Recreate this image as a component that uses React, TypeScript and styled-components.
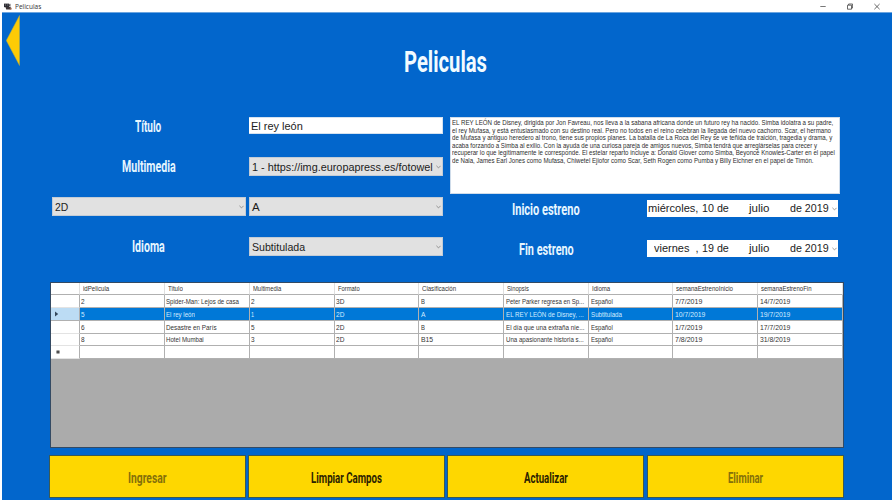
import React, { useLayoutEffect, useRef, useState } from "react";
import styled, { createGlobalStyle, css } from "styled-components";

const GlobalStyle = createGlobalStyle`
  *, *::before, *::after { box-sizing: border-box; }
  body { margin: 0; overflow: hidden; background: #fff; font-family: "Liberation Sans", Arial, sans-serif; }
`;

/* Text condensed or expanded horizontally to a given width. */
const FitBox = styled.span<{ $width: number }>`
  display: block;
  flex: none;
  width: ${(p) => p.$width}px;
  white-space: pre;
`;
const FitInner = styled.span`
  display: inline-block;
  vertical-align: top;
  transform-origin: 0 50%;
`;

function Fit({ w, children }: { w: number; children: string }) {
  const ref = useRef<HTMLSpanElement>(null);
  const [scale, setScale] = useState(1);
  useLayoutEffect(() => {
    const natural = ref.current?.offsetWidth;
    if (natural) setScale(w / natural);
  }, [w, children]);
  return (
    <FitBox $width={w}>
      <FitInner ref={ref} style={{ transform: `scaleX(${scale})` }}>
        {children}
      </FitInner>
    </FitBox>
  );
}

const Window = styled.div`
  display: flex;
  flex-direction: column;
  width: 893px;
  height: 500px;
  background: #fff;
`;

const TitleBar = styled.header`
  display: flex;
  align-items: center;
  height: 12px;
  flex: none;
  padding: 0 13px 0 4px;
  font: 7.5px/11px "Open Sans", sans-serif;
  color: #333;
`;
const AppIcon = styled.svg`
  width: 8px;
  height: 7px;
  margin-right: 3px;
`;
const WindowControls = styled.div`
  display: flex;
  gap: 21px;
  margin-left: auto;
  svg { width: 6px; height: 7px; display: block; }
`;

const Client = styled.main`
  flex: 1;
  display: flex;
  flex-direction: column;
  margin: 0 1px 0 2px;
  padding-left: 47px;
  background: #0266cc;
  border-top: 1px solid #6ba5e0;
`;

const Head = styled.div`
  display: flex;
  height: 104px;
  flex: none;
  margin-left: -47px;
`;
const BackButton = styled.button`
  width: 14px;
  height: 51px;
  margin: 2px 0 0 4px;
  padding: 0;
  border: 0;
  background: none;
  svg { display: block; }
`;
const agency = css`
  font-family: Roboto, sans-serif;
  font-weight: 700;
`;
const Title = styled.h1`
  ${agency}
  margin: 32px 0 0 383.5px;
  font-size: 29px;
  line-height: 34px;
  color: #f2fbff;
`;

const Form = styled.section`
  display: flex;
  height: 165px;
  flex: none;
`;
const Fields = styled.div`
  display: grid;
  grid-template-columns: 194px 194px;
  grid-auto-rows: 40px;
  column-gap: 3px;
  padding-left: 3px;
`;
const Details = styled.div`
  width: 390px;
  margin-left: 7px;
`;
const LabelCell = styled.label<{ $height: number; $indent: number }>`
  ${agency}
  display: flex;
  align-items: center;
  height: ${(p) => p.$height}px;
  padding-left: ${(p) => p.$indent}px;
  font-size: 17px;
  line-height: 18px;
  color: #e6f6ff;
`;
const TextInput = styled.div`
  display: flex;
  align-items: center;
  height: 17px;
  padding: 1px 0 0 2px;
  background: #fff;
  border: 1px solid #d5e2f0;
  border-left-width: 0;
  font-size: 11.5px;
  line-height: 13px;
  color: #1c1c1c;
`;
const Select = styled.div`
  display: flex;
  align-items: center;
  justify-content: space-between;
  height: 19px;
  padding: 1px 1px 0 2px;
  background: #e1e1e1;
  border: 1px solid #c3ccd6;
  font-size: 11.5px;
  line-height: 13px;
  color: #1c1c1c;
`;
const SelectCell = styled.div`
  width: 194px;
`;
const Synopsis = styled.div`
  height: 77px;
  padding: 1px 0 0 1px;
  background: #fff;
  border: 1px solid #cfdcea;
  font-size: 7.4px;
  line-height: 7.6px;
  color: #2d2d2d;
`;
const DateRow = styled.div`
  display: flex;
  justify-content: space-between;
  height: 40px;
  padding-right: 2px;
`;
const DatePicker = styled.div<{ $indent: number }>`
  display: flex;
  align-items: center;
  width: 191px;
  height: 17px;
  margin-top: 6px;
  padding: 0 1px 0 ${(p) => p.$indent}px;
  background: #fff;
  font-size: 11.5px;
  line-height: 13px;
  color: #1c1c1c;
`;
const Gap = styled.span<{ $width: number }>`
  flex: none;
  width: ${(p) => p.$width}px;
`;
const Push = styled.span`
  margin-left: auto;
  display: flex;
`;

const Table = styled.div`
  width: 794px;
  height: 166px;
  flex: none;
  background: #ababab;
  border: 1px solid #344a63;
  margin-left: 0.5px;
`;
const Row = styled.div<{ $selected?: boolean; $height: number }>`
  display: grid;
  grid-template-columns: 29px 85px 85px 85px 84.5px 85px 85px 84px 85px 84.5px;
  height: ${(p) => p.$height}px;
  background: ${(p) => (p.$selected ? "#0078d7" : "#fff")};
  color: ${(p) => (p.$selected ? "#d4ecff" : "#333")};
  font-size: 7.4px;
  line-height: 9px;
`;
const Cell = styled.div<{ $header?: boolean; $marker?: boolean; $tint?: boolean }>`
  display: flex;
  align-items: center;
  padding-left: ${(p) => (p.$header ? 3 : p.$marker ? 4 : 1.5)}px;
  border-right: 1px solid ${(p) => (p.$header ? "#dfdfdf" : "#b0b0b0")};
  border-bottom: 1px solid ${(p) => (p.$marker && !p.$tint ? "#e3e3e3" : "#b0b0b0")};
  background: ${(p) => (p.$tint ? "#bcdcf4" : "transparent")};
  overflow: hidden;
`;

const Actions = styled.footer`
  display: grid;
  grid-template-columns: repeat(4, 197px);
  column-gap: 2.2px;
  height: 43px;
  flex: none;
  margin: 7px 0 0;
`;
const ActionButton = styled.button<{ $disabled?: boolean }>`
  ${agency}
  display: flex;
  align-items: center;
  justify-content: center;
  padding: 2px 0 0;
  background: #fed700;
  border: 1px solid #3b5a54;
  font-size: 15.5px;
  line-height: 18px;
  color: ${(p) => (p.$disabled ? "#84700a" : "#2b2200")};
`;

const Chevron = () => (
  <svg width="5" height="4" viewBox="0 0 5 4">
    <path d="M.4 .8 2.5 2.9 4.6 .8" fill="none" stroke="#808080" strokeWidth=".8" />
  </svg>
);

type T = [string, number];
const columns: T[] = [
  ["idPelicula", 26.5], ["Titulo", 15], ["Multimedia", 28.5], ["Formato", 22], ["Clasificación", 34.5],
  ["Sinopsis", 22], ["Idioma", 18], ["semanaEstrenoInicio", 57], ["semanaEstrenoFin", 50.5],
];
const rows: T[][] = [
  [["2", 3.5], ["Spider-Man: Lejos de casa", 73], ["2", 3.5], ["3D", 8], ["B", 4], ["Peter Parker regresa en Sp...", 78], ["Español", 22], ["7/7/2019", 27.5], ["14/7/2019", 30.5]],
  [["5", 3.5], ["El rey león", 29], ["1", 3], ["2D", 8], ["A", 4.5], ["EL REY LEÓN de Disney, ...", 78], ["Subtitulada", 31], ["10/7/2019", 30.5], ["19/7/2019", 30.5]],
  [["6", 3.5], ["Desastre en París", 50.5], ["5", 3.5], ["2D", 8], ["B", 4], ["El día que una extraña nie...", 78], ["Español", 22], ["1/7/2019", 27.5], ["17/7/2019", 30.5]],
  [["8", 3.5], ["Hotel Mumbai", 38], ["3", 3.5], ["2D", 8], ["B15", 12], ["Una apasionante historia s...", 78], ["Español", 22], ["7/8/2019", 27.5], ["31/8/2019", 30.5]],
];
const heights = [13, 13, 13, 12];
const synopsis: T[] = [
  ["EL REY LEÓN de Disney, dirigida por Jon Favreau, nos lleva a la sabana africana donde un futuro rey ha nacido. Simba idolatra a su padre,", 381.5],
  ["el rey Mufasa, y está entusiasmado con su destino real. Pero no todos en el reino celebran la llegada del nuevo cachorro. Scar, el hermano", 379],
  ["de Mufasa y antiguo heredero al trono, tiene sus propios planes. La batalla de La Roca del Rey se ve teñida de traición, tragedia y drama, y", 380],
  ["acaba forzando a Simba al exilio. Con la ayuda de una curiosa pareja de amigos nuevos, Simba tendrá que arreglárselas para crecer y", 365],
  ["recuperar lo que legítimamente le corresponde. El estelar reparto incluye a: Donald Glover como Simba, Beyoncé Knowles-Carter en el papel", 382.5],
  ["de Nala, James Earl Jones como Mufasa, Chiwetel Ejiofor como Scar, Seth Rogen como Pumba y Billy Eichner en el papel de Timón.", 361.5],
];

function Combo({ text, w }: { text: string; w: number }) {
  return (
    <Select>
      <Fit w={w}>{text}</Fit>
      <Chevron />
    </Select>
  );
}

function DateField({ label, labelW, labelIndent, day, dayW, indent, gap, num }: {
  label: string; labelW: number; labelIndent: number; day: string; dayW: number; indent: number; gap: number; num: string;
}) {
  return (
    <DateRow>
      <LabelCell $height={30} $indent={labelIndent}><Fit w={labelW}>{label}</Fit></LabelCell>
      <DatePicker $indent={indent}>
        <Fit w={dayW}>{day}</Fit>
        <Gap $width={gap} />
        <Fit w={27}>{num}</Fit>
        <Gap $width={20} />
        <Fit w={20}>julio</Fit>
        <Gap $width={20.5} />
        <Fit w={39}>de 2019</Fit>
        <Push><Chevron /></Push>
      </DatePicker>
    </DateRow>
  );
}

export default function App() {
  return (
    <>
      <GlobalStyle />
      <Window>
        <TitleBar>
          <AppIcon viewBox="0 0 8 7">
            <path d="M0 .6h5.2v3.6H0z" fill="#2e2e34" />
            <path d="M5.2 1.6 6.4.8v3L5.2 3zM1.5 4h5.2v2.6H2.2z" fill="#3c3538" />
            <path d="M5.8 4.8h1.8v1.7H5.8z" fill="#98624d" />
            <path d="M1 1.5h1v1H1zM3.2 1.5h1v1h-1z" fill="#81818a" />
          </AppIcon>
          <Fit w={26}>Peliculas</Fit>
          <WindowControls>
            <svg viewBox="0 0 6 7"><path d="M.3 3.5h5.4" stroke="#555" strokeWidth=".8" /></svg>
            <svg viewBox="0 0 6 7"><path d="M.5 2.2h4v4h-4zM1.6 2V1h4v4h-.9" fill="none" stroke="#444" strokeWidth=".8" /></svg>
            <svg viewBox="0 0 6 7"><path d="m.4 1 5.2 5.2M5.6 1 .4 6.2" stroke="#444" strokeWidth=".8" /></svg>
          </WindowControls>
        </TitleBar>
        <Client>
          <Head>
            <BackButton aria-label="Volver">
              <svg width="14" height="51" viewBox="0 0 14 51">
                <path d="M13.5 .5v50L.3 25.5z" fill="#fdcb05" stroke="#b3ad45" strokeWidth=".5" />
              </svg>
            </BackButton>
            <Title><Fit w={83}>Peliculas</Fit></Title>
          </Head>
          <Form>
            <Fields>
              <LabelCell $height={18} $indent={83}><Fit w={26.5}>Título</Fit></LabelCell>
              <TextInput><Fit w={51.5}>El rey león</Fit></TextInput>
              <LabelCell $height={18} $indent={69.5}><Fit w={53.5}>Multimedia</Fit></LabelCell>
              <Combo text="1 - https://img.europapress.es/fotowel" w={181} />
              <SelectCell><Combo text="2D" w={13.5} /></SelectCell>
              <Combo text="A" w={8} />
              <LabelCell $height={18} $indent={80}><Fit w={32.5}>Idioma</Fit></LabelCell>
              <Combo text="Subtitulada" w={53.5} />
            </Fields>
            <Details>
              <Synopsis>
                {synopsis.map(([t, w]) => <Fit key={t} w={w}>{t}</Fit>)}
              </Synopsis>
              <DateField label="Inicio estreno" labelW={67.5} labelIndent={62} day="miércoles," dayW={50} indent={1} gap={4} num="10 de" />
              <DateField label="Fin estreno" labelW={55} labelIndent={69} day="viernes  ," dayW={45} indent={6.5} gap={3.5} num="19 de" />
            </Details>
          </Form>
          <Table>
            <Row $height={12}>
              <Cell $header />
              {columns.map(([t, w]) => <Cell key={t} $header><Fit w={w}>{t}</Fit></Cell>)}
            </Row>
            {rows.map((r, i) => (
              <Row key={i} $height={heights[i]} $selected={i === 1}>
                <Cell $marker $tint={i === 1}>
                  {i === 1 && <svg width="4" height="6" viewBox="0 0 4 6"><path d="M0 .5 3.2 3 0 5.5z" fill="#34475a" /></svg>}
                </Cell>
                {r.map(([t, w], j) => <Cell key={j}><Fit w={w}>{t}</Fit></Cell>)}
              </Row>
            ))}
            <Row $height={13}>
              <Cell $marker>
                <svg width="6" height="6" viewBox="0 0 6 6"><path d="M3 1v4M1.2 2l3.6 2M4.8 2 1.2 4" stroke="#333" strokeWidth=".9" /></svg>
              </Cell>
              {columns.map(([t]) => <Cell key={t} />)}
            </Row>
          </Table>
          <Actions>
            <ActionButton $disabled><Fit w={38.5}>Ingresar</Fit></ActionButton>
            <ActionButton><Fit w={71}>Limpiar Campos</Fit></ActionButton>
            <ActionButton><Fit w={44}>Actualizar</Fit></ActionButton>
            <ActionButton $disabled><Fit w={35}>Eliminar</Fit></ActionButton>
          </Actions>
        </Client>
      </Window>
    </>
  );
}
